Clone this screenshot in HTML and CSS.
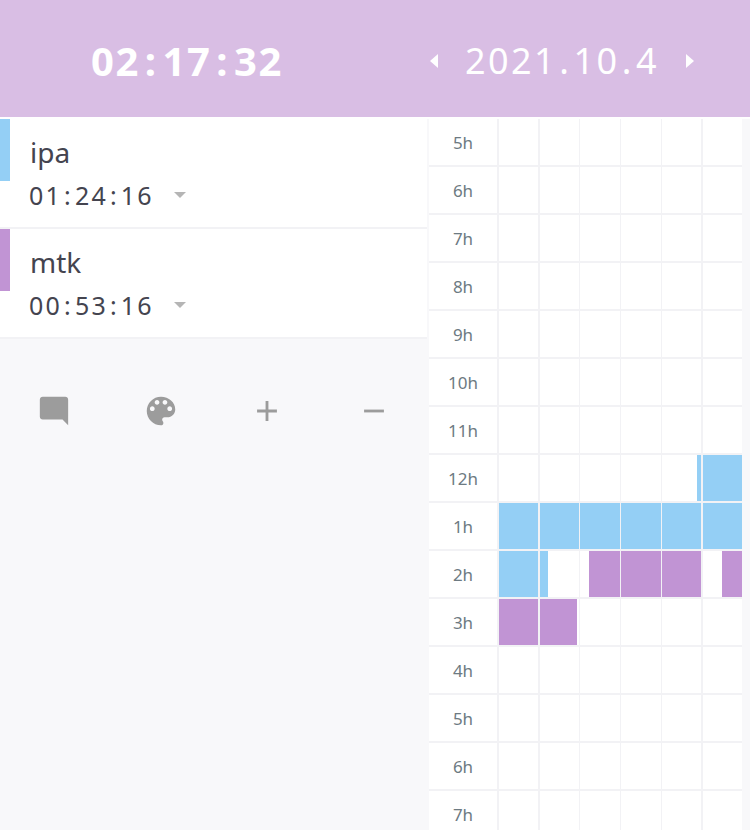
FILE: index.html
```html
<!DOCTYPE html>
<html lang="en">
<head>
    <meta charset="UTF-8">
    <meta name="viewport" content="width=device-width, initial-scale=1.0">
    <title>Time Tracker</title>
    <link rel="stylesheet" href="styles.css">
</head>
<body>
    <div class="header">
        <div class="timer">02<span class="sep">:</span>17<span class="sep">:</span>32</div>
        <div class="date-nav">
            <span class="arrow arrow-left"></span>
            <span class="date">2021<span class="dot">.</span>10<span class="dot">.</span>4</span>
            <span class="arrow arrow-right"></span>
        </div>
    </div>

    <div class="main">
        <div class="sidebar">
            <div class="task">
                <div class="task-color color-blue"></div>
                <div class="task-info">
                    <div class="task-name">ipa</div>
                    <div class="task-time">01<span class="colon">:</span>24<span class="colon">:</span>16<span class="caret"></span></div>
                </div>
            </div>
            <div class="task">
                <div class="task-color color-purple"></div>
                <div class="task-info">
                    <div class="task-name">mtk</div>
                    <div class="task-time">00<span class="colon">:</span>53<span class="colon">:</span>16<span class="caret"></span></div>
                </div>
            </div>

            <div class="toolbar">
                <div class="tool">
                    <svg class="icon" viewBox="0 0 24 24"><path d="M21.99 4c0-1.1-.89-2-1.99-2H4c-1.1 0-2 .9-2 2v12c0 1.1.9 2 2 2h14l4 4-.01-18z"/></svg>
                </div>
                <div class="tool">
                    <svg class="icon icon-palette" viewBox="0 0 24 24"><path d="M12 3c-4.97 0-9 4.03-9 9s4.03 9 9 9c.83 0 1.5-.67 1.5-1.5 0-.39-.15-.74-.39-1.01-.23-.26-.38-.61-.38-.99 0-.83.67-1.5 1.5-1.5H16c2.76 0 5-2.24 5-5 0-4.42-4.03-8-9-8zm-5.500 9c-.83 0-1.5-.67-1.5-1.5S5.670 9 6.500 9 8 9.670 8 10.500 7.330 12 6.500 12zm3-4C8.670 8 8 7.330 8 6.500S8.670 5 9.500 5s1.500.67 1.500 1.500S10.330 8 9.500 8zm5 0c-.83 0-1.500-.67-1.500-1.500S13.670 5 14.500 5s1.500.67 1.500 1.500S15.330 8 14.500 8zm3 4c-.83 0-1.500-.67-1.500-1.500S16.670 9 17.500 9s1.500.67 1.500 1.500-.67 1.500-1.500 1.500z"/></svg>
                </div>
                <div class="tool">
                    <svg class="icon" viewBox="0 0 24 24"><path d="M19 13h-6v6h-2v-6H5v-2h6V5h2v6h6v2z"/></svg>
                </div>
                <div class="tool">
                    <svg class="icon" viewBox="0 0 24 24"><path d="M19 13H5v-2h14v2z"/></svg>
                </div>
            </div>
        </div>

        <div class="timeline">
            <div class="hour">5h</div><div class="cell"></div><div class="cell"></div><div class="cell"></div><div class="cell"></div><div class="cell"></div><div class="cell"></div>
            <div class="hour">6h</div><div class="cell"></div><div class="cell"></div><div class="cell"></div><div class="cell"></div><div class="cell"></div><div class="cell"></div>
            <div class="hour">7h</div><div class="cell"></div><div class="cell"></div><div class="cell"></div><div class="cell"></div><div class="cell"></div><div class="cell"></div>
            <div class="hour">8h</div><div class="cell"></div><div class="cell"></div><div class="cell"></div><div class="cell"></div><div class="cell"></div><div class="cell"></div>
            <div class="hour">9h</div><div class="cell"></div><div class="cell"></div><div class="cell"></div><div class="cell"></div><div class="cell"></div><div class="cell"></div>
            <div class="hour">10h</div><div class="cell"></div><div class="cell"></div><div class="cell"></div><div class="cell"></div><div class="cell"></div><div class="cell"></div>
            <div class="hour">11h</div><div class="cell"></div><div class="cell"></div><div class="cell"></div><div class="cell"></div><div class="cell"></div><div class="cell"></div>

            <div class="hour">12h</div><div class="cell"></div><div class="cell"></div><div class="cell"></div><div class="cell"></div>
            <div class="cell"><div class="slot color-blue" style="left: 88%; width: 12%"></div></div>
            <div class="cell color-blue"></div>

            <div class="hour">1h</div><div class="cell color-blue"></div><div class="cell color-blue"></div><div class="cell color-blue"></div><div class="cell color-blue"></div><div class="cell color-blue"></div><div class="cell color-blue"></div>

            <div class="hour">2h</div>
            <div class="cell color-blue"></div>
            <div class="cell"><div class="slot color-blue" style="left: 0; width: 22%"></div></div>
            <div class="cell"><div class="slot color-purple" style="left: 22%; width: 78%"></div></div>
            <div class="cell color-purple"></div>
            <div class="cell color-purple"></div>
            <div class="cell"><div class="slot color-purple" style="left: 47%; width: 53%"></div></div>

            <div class="hour">3h</div>
            <div class="cell color-purple"></div>
            <div class="cell"><div class="slot color-purple" style="left: 0; width: 96%"></div></div>
            <div class="cell"></div><div class="cell"></div><div class="cell"></div><div class="cell"></div>

            <div class="hour">4h</div><div class="cell"></div><div class="cell"></div><div class="cell"></div><div class="cell"></div><div class="cell"></div><div class="cell"></div>
            <div class="hour">5h</div><div class="cell"></div><div class="cell"></div><div class="cell"></div><div class="cell"></div><div class="cell"></div><div class="cell"></div>
            <div class="hour">6h</div><div class="cell"></div><div class="cell"></div><div class="cell"></div><div class="cell"></div><div class="cell"></div><div class="cell"></div>
            <div class="hour">7h</div><div class="cell"></div><div class="cell"></div><div class="cell"></div><div class="cell"></div><div class="cell"></div><div class="cell"></div>
        </div>
    </div>
</body>
</html>
```
FILE: styles.css
```css
:root {
    --header-color: #d9bee4;
    --blue: #94cff5;
    --purple: #c194d4;
    --page: #f8f8fa;
    --line: #f2f2f5;
    --text-dark: #44444f;
    --text-hour: #6d7a82;
    --icon: #9c9c9c;
    --white: #ffffff;
}

* {
    margin: 0;
    padding: 0;
    box-sizing: border-box;
    font-family: "Noto Sans", sans-serif;
}

html, body {
    height: 830px;
    overflow: hidden;
}

body {
    background-color: var(--page);
    color: var(--text-dark);
}

.header {
    background-color: var(--header-color);
    color: var(--white);
    height: 117px;
    padding-top: 4px;
    display: flex;
    align-items: center;
}

.timer {
    margin-left: 91px;
    width: 339px;
    font-size: 40px;
    font-weight: 700;
    letter-spacing: 1.5px;
}

.sep {
    margin: 0 5px;
}

.date-nav {
    display: flex;
    align-items: center;
}

.date {
    margin: 0 27px;
    font-size: 36px;
    letter-spacing: 2.4px;
}

.dot {
    margin: 0 2.250px;
}

.arrow {
    width: 0;
    height: 0;
    border-top: 7px solid transparent;
    border-bottom: 7px solid transparent;
}

.arrow-left {
    border-right: 8px solid var(--white);
}

.arrow-right {
    border-left: 8px solid var(--white);
}

.main {
    display: flex;
    border-top: 2px solid var(--white);
}

/* Task list */
.sidebar {
    width: 427px;
    flex-shrink: 0;
}

.task {
    background-color: var(--white);
    height: 110px;
    border-bottom: 2px solid var(--line);
    display: flex;
    align-items: flex-start;
}

.task-color {
    width: 10px;
    height: 62px;
}

.task-info {
    padding-left: 19px;
}

.task-name {
    font-size: 28px;
    line-height: 38px;
    margin: 14px 0 0 1px;
}

.task-time {
    font-size: 25px;
    line-height: 34px;
    margin-top: 7px;
    letter-spacing: 2.2px;
    display: flex;
    align-items: center;
}

.colon {
    margin: 0 2px;
}

.caret {
    width: 0;
    height: 0;
    margin-left: 20px;
    border-left: 6px solid transparent;
    border-right: 6px solid transparent;
    border-top: 6px solid #b5b5b5;
}

.toolbar {
    display: flex;
    margin-top: 52px;
    padding-left: 1px;
}

.tool {
    flex: 1;
    display: flex;
    justify-content: center;
    align-items: center;
    height: 40px;
}

.icon {
    width: 34px;
    height: 34px;
    fill: var(--icon);
}

.icon-palette {
    width: 38px;
    height: 38px;
}

/* Day grid */
.timeline {
    flex: 1;
    margin-left: 2px;
    margin-right: 7.700px;
    display: grid;
    grid-template-columns: 68px repeat(6, 1fr);
    grid-auto-rows: 46px;
    column-gap: 1.700px;
    row-gap: 2px;
    background-color: var(--line);
    height: 720px;
    overflow: hidden;
}

.hour {
    background-color: var(--white);
    color: var(--text-hour);
    font-size: 17px;
    display: flex;
    justify-content: center;
    align-items: center;
}

.cell {
    background-color: var(--white);
    position: relative;
}

.slot {
    position: absolute;
    top: 0;
    bottom: 0;
}

.color-blue {
    background-color: var(--blue);
}

.color-purple {
    background-color: var(--purple);
}
```
